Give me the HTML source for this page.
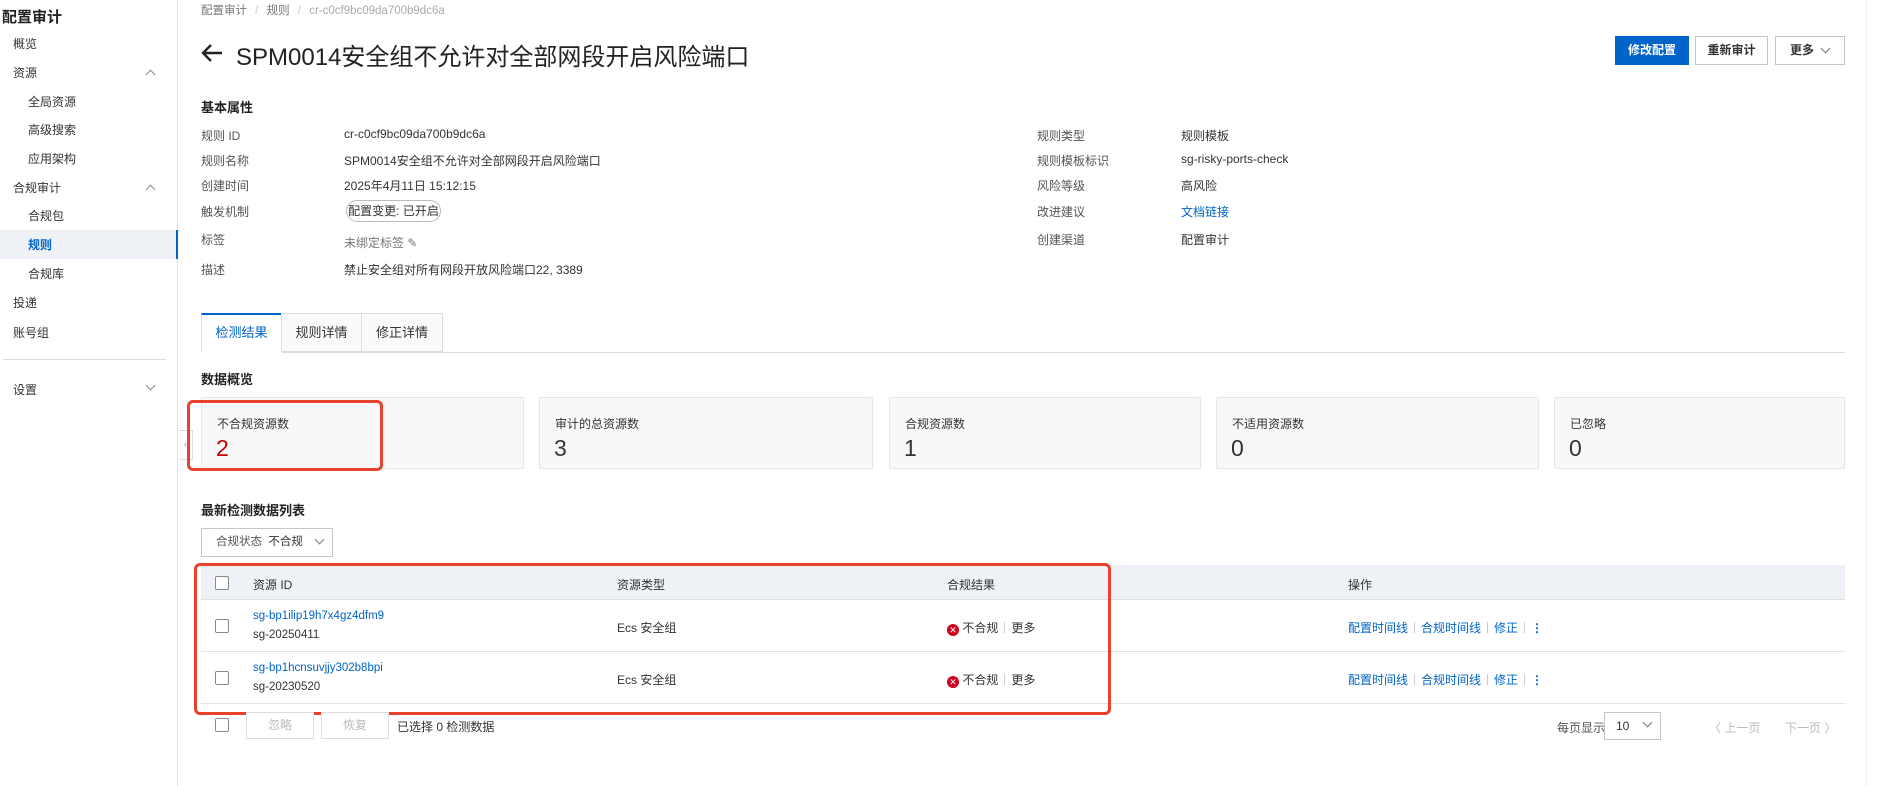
<!DOCTYPE html>
<html><head><meta charset="utf-8"><style>
*{box-sizing:border-box;margin:0;padding:0}
body{width:1879px;height:786px;overflow:hidden;background:#fff;font-family:"Liberation Sans","Noto Sans CJK SC",sans-serif;font-size:12px;color:#333;position:relative}
.a{position:absolute;white-space:nowrap}
.side{position:absolute;left:0;top:0;width:178px;height:786px;border-right:1px solid #e3e3e3}
.chev{position:absolute;width:7px;height:7px;border-left:1.3px solid #888;border-top:1.3px solid #888}
.lbl{color:#555}
.card{position:absolute;top:397px;height:72px;background:#f7f8fa;border:1px solid #e6e6e6;border-radius:2px}
.card .t{position:absolute;left:15px;top:17px;color:#333}
.card .v{position:absolute;left:14px;top:37px;font-size:23px;color:#333}
.cb{position:absolute;width:14px;height:14px;border:1px solid #888;border-radius:2px;background:#fff}
.lnk{color:#0064c8}
.btn{position:absolute;height:29px;border:1px solid #c6c6c6;text-align:center;line-height:27px;background:#fff}
.sep{display:inline-block;width:1px;height:11px;background:#ccc;margin:0 6px;vertical-align:-1px}
</style></head><body>
<div class="side">
<div class="a" style="left:2px;top:6px;font-size:15px;font-weight:bold;color:#222">配置审计</div>
<div class="a" style="left:13px;top:35px">概览</div>
<div class="a" style="left:13px;top:64px">资源</div><div class="chev" style="left:147px;top:71px;transform:rotate(45deg)"></div>
<div class="a" style="left:28px;top:93px">全局资源</div>
<div class="a" style="left:28px;top:121px">高级搜索</div>
<div class="a" style="left:28px;top:150px">应用架构</div>
<div class="a" style="left:13px;top:179px">合规审计</div><div class="chev" style="left:147px;top:186px;transform:rotate(45deg)"></div>
<div class="a" style="left:28px;top:207px">合规包</div>
<div style="position:absolute;left:0;top:230px;width:178px;height:29px;background:#eef1f6;border-right:2px solid #0064c8"></div>
<div class="a" style="left:28px;top:236px;color:#0064c8;font-weight:bold">规则</div>
<div class="a" style="left:28px;top:265px">合规库</div>
<div class="a" style="left:13px;top:294px">投递</div>
<div class="a" style="left:13px;top:324px">账号组</div>
<div style="position:absolute;left:3px;top:359px;width:163px;height:1px;background:#ddd"></div>
<div class="a" style="left:13px;top:381px">设置</div><div class="chev" style="left:147px;top:382px;transform:rotate(225deg)"></div>
</div>
<div style="position:absolute;left:179px;top:430px;width:14px;height:30px;border:1px solid #ddd;border-left:none;background:#fff;color:#999;font-size:10px;line-height:28px;text-align:center">‹</div>
<div style="position:absolute;left:1866px;top:0;width:1px;height:786px;background:#eee"></div>

<div class="a" style="left:201px;top:2px;color:#777;font-size:11.5px">配置审计 <span style="color:#ccc;margin:0 5px">/</span> 规则 <span style="color:#ccc;margin:0 5px">/</span> <span style="color:#aaa">cr-c0cf9bc09da700b9dc6a</span></div>
<svg class="a" style="left:201px;top:43px" width="22" height="20" viewBox="0 0 22 20"><path d="M21 10H3M10 2L2 10l8 8" stroke="#222" stroke-width="2.4" fill="none"/></svg>
<div class="a" style="left:236px;top:37px;font-size:24px;color:#222">SPM0014安全组不允许对全部网段开启风险端口</div>
<div class="btn" style="left:1615px;top:36px;width:74px;background:#0064c8;border-color:#0064c8;color:#fff;font-weight:bold">修改配置</div>
<div class="btn" style="left:1695px;top:36px;width:73px;font-weight:bold">重新审计</div>
<div class="btn" style="left:1775px;top:36px;width:70px;text-align:left;padding-left:14px;font-weight:bold">更多</div><div class="chev" style="left:1822px;top:45px;transform:rotate(225deg);border-color:#777"></div>

<div class="a" style="left:201px;top:97px;font-size:13px;font-weight:bold;color:#222">基本属性</div>
<div class="a lbl" style="left:201px;top:127px">规则 ID</div><div class="a" style="left:344px;top:127px">cr-c0cf9bc09da700b9dc6a</div>
<div class="a lbl" style="left:201px;top:152px">规则名称</div><div class="a" style="left:344px;top:152px">SPM0014安全组不允许对全部网段开启风险端口</div>
<div class="a lbl" style="left:201px;top:177px">创建时间</div><div class="a" style="left:344px;top:177px">2025年4月11日 15:12:15</div>
<div class="a lbl" style="left:201px;top:203px">触发机制</div><div class="a" style="left:346px;top:200px;width:95px;height:22px;border:1px solid #bbb;border-radius:11px;text-align:center;line-height:20px">配置变更: 已开启</div>
<div class="a lbl" style="left:201px;top:231px">标签</div><div class="a" style="left:344px;top:234px;color:#777">未绑定标签 ✎</div>
<div class="a lbl" style="left:201px;top:261px">描述</div><div class="a" style="left:344px;top:261px">禁止安全组对所有网段开放风险端口22, 3389</div>
<div class="a lbl" style="left:1037px;top:127px">规则类型</div><div class="a" style="left:1181px;top:127px">规则模板</div>
<div class="a lbl" style="left:1037px;top:152px">规则模板标识</div><div class="a" style="left:1181px;top:152px">sg-risky-ports-check</div>
<div class="a lbl" style="left:1037px;top:177px">风险等级</div><div class="a" style="left:1181px;top:177px">高风险</div>
<div class="a lbl" style="left:1037px;top:203px">改进建议</div><div class="a lnk" style="left:1181px;top:203px">文档链接</div>
<div class="a lbl" style="left:1037px;top:231px">创建渠道</div><div class="a" style="left:1181px;top:231px">配置审计</div>

<div style="position:absolute;left:201px;top:352px;width:1644px;height:1px;background:#ddd"></div>
<div class="a" style="left:201px;top:313px;width:81px;height:40px;border:1px solid #ddd;border-top:2px solid #0064c8;border-bottom:1px solid #fff;background:#fff;text-align:center;line-height:36px;color:#0064c8;font-size:13px">检测结果</div>
<div class="a" style="left:281px;top:313px;width:81px;height:39px;border:1px solid #ddd;text-align:center;line-height:37px;font-size:13px;background:#fafafa">规则详情</div>
<div class="a" style="left:361px;top:313px;width:82px;height:39px;border:1px solid #ddd;text-align:center;line-height:37px;font-size:13px;background:#fafafa">修正详情</div>

<div class="a" style="left:201px;top:369px;font-size:13px;font-weight:bold;color:#222">数据概览</div>
<div class="card" style="left:201px;width:323px"><div class="t">不合规资源数</div><div class="v" style="color:#c80000">2</div></div>
<div class="card" style="left:539px;width:334px"><div class="t">审计的总资源数</div><div class="v">3</div></div>
<div class="card" style="left:889px;width:312px"><div class="t">合规资源数</div><div class="v">1</div></div>
<div class="card" style="left:1216px;width:323px"><div class="t">不适用资源数</div><div class="v">0</div></div>
<div class="card" style="left:1554px;width:291px"><div class="t">已忽略</div><div class="v">0</div></div>
<div style="position:absolute;left:187px;top:400px;width:196px;height:71px;border:3px solid #e8412c;border-radius:6px"></div>

<div class="a" style="left:201px;top:500px;font-size:13px;font-weight:bold;color:#222">最新检测数据列表</div>
<div class="a" style="left:201px;top:528px;width:132px;height:29px;border:1px solid #c6c6c6;line-height:27px;padding-left:14px;font-size:11.5px"><span style="color:#555">合规状态</span>&nbsp;&nbsp;不合规</div><div class="chev" style="left:316px;top:536px;transform:rotate(225deg);border-color:#777"></div>

<div style="position:absolute;left:201px;top:565px;width:1644px;height:35px;background:#eef1f6;border-bottom:1px solid #e0e0e0"></div>
<div class="cb" style="left:215px;top:576px"></div>
<div class="a" style="left:253px;top:576px">资源 ID</div><div class="a" style="left:617px;top:576px">资源类型</div><div class="a" style="left:947px;top:576px">合规结果</div><div class="a" style="left:1348px;top:576px">操作</div>
<div style="position:absolute;left:201px;top:651px;width:1644px;height:1px;background:#e3e3e3"></div>
<div style="position:absolute;left:201px;top:703px;width:1644px;height:1px;background:#e3e3e3"></div>

<div class="cb" style="left:215px;top:619px"></div>
<div class="a lnk" style="left:253px;top:610px;font-size:11.5px">sg-bp1ilip19h7x4gz4dfm9</div><div class="a" style="left:253px;top:629px;font-size:11.5px">sg-20250411</div>
<div class="a" style="left:617px;top:619px">Ecs 安全组</div>
<div class="a" style="left:947px;top:619px"><span style="display:inline-block;width:12px;height:12px;border-radius:6px;background:#d0021b;color:#fff;font-size:9px;line-height:12px;text-align:center;vertical-align:-1px">✕</span> 不合规<span class="sep"></span>更多</div>
<div class="a lnk" style="left:1348px;top:619px">配置时间线<span class="sep"></span>合规时间线<span class="sep"></span>修正<span class="sep"></span><b>⋮</b></div>

<div class="cb" style="left:215px;top:671px"></div>
<div class="a lnk" style="left:253px;top:662px;font-size:11.5px">sg-bp1hcnsuvjjy302b8bpi</div><div class="a" style="left:253px;top:681px;font-size:11.5px">sg-20230520</div>
<div class="a" style="left:617px;top:671px">Ecs 安全组</div>
<div class="a" style="left:947px;top:671px"><span style="display:inline-block;width:12px;height:12px;border-radius:6px;background:#d0021b;color:#fff;font-size:9px;line-height:12px;text-align:center;vertical-align:-1px">✕</span> 不合规<span class="sep"></span>更多</div>
<div class="a lnk" style="left:1348px;top:671px">配置时间线<span class="sep"></span>合规时间线<span class="sep"></span>修正<span class="sep"></span><b>⋮</b></div>

<div style="position:absolute;left:194px;top:563px;width:917px;height:152px;border:3px solid #e8412c;border-radius:6px"></div>

<div class="cb" style="left:215px;top:718px"></div>
<div class="btn" style="left:246px;top:712px;width:68px;height:27px;line-height:25px;color:#bbb;border-color:#ddd">忽略</div>
<div class="btn" style="left:321px;top:712px;width:68px;height:27px;line-height:25px;color:#bbb;border-color:#ddd">恢复</div>
<div class="a" style="left:397px;top:718px">已选择 0 检测数据</div>
<div class="a" style="left:1557px;top:719px;color:#555">每页显示</div>
<div class="a" style="left:1604px;top:712px;width:57px;height:28px;border:1px solid #c6c6c6;line-height:26px;padding-left:11px">10</div><div class="chev" style="left:1644px;top:719px;transform:rotate(225deg);border-color:#777"></div>
<div class="a" style="left:1709px;top:719px;color:#bbb">〈 上一页</div>
<div class="a" style="left:1785px;top:719px;color:#bbb">下一页 〉</div>
</body></html>
